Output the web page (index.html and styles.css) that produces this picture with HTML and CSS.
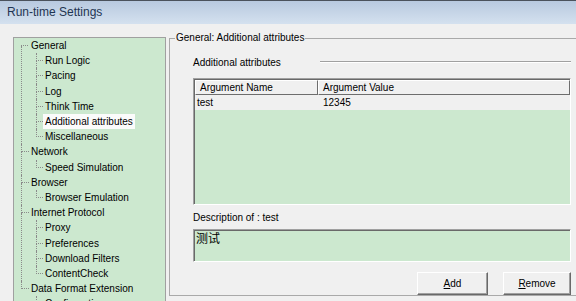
FILE: index.html
```html
<!DOCTYPE html>
<html>
  <head>
    <title>Run-time Settings</title>
    <meta charset="utf-8">
    <link rel="stylesheet" href="styles.css">
  </head>
  <body>
    <div class="titlebar">Run-time Settings</div>
    <div class="client">
      <div class="tree">
        <ul class="tree-root">
          <li><span class="node">General</span>
            <ul>
              <li><span class="node">Run Logic</span></li>
              <li><span class="node">Pacing</span></li>
              <li><span class="node">Log</span></li>
              <li><span class="node">Think Time</span></li>
              <li><span class="node selected">Additional attributes</span></li>
              <li><span class="node">Miscellaneous</span></li>
            </ul>
          </li>
          <li><span class="node">Network</span>
            <ul>
              <li><span class="node">Speed Simulation</span></li>
            </ul>
          </li>
          <li><span class="node">Browser</span>
            <ul>
              <li><span class="node">Browser Emulation</span></li>
            </ul>
          </li>
          <li><span class="node">Internet Protocol</span>
            <ul>
              <li><span class="node">Proxy</span></li>
              <li><span class="node">Preferences</span></li>
              <li><span class="node">Download Filters</span></li>
              <li><span class="node">ContentCheck</span></li>
            </ul>
          </li>
          <li><span class="node">Data Format Extension</span>
            <ul>
              <li><span class="node">Configuration</span></li>
            </ul>
          </li>
        </ul>
      </div>
      <fieldset class="group">
        <legend>General: Additional attributes</legend>
        <div class="group-body">
          <div class="section-title">
            <span class="section-label">Additional attributes</span>
            <div class="rule"></div>
          </div>
          <div class="list">
            <div class="list-head">
              <div class="col">Argument Name</div>
              <div class="col">Argument Value</div>
            </div>
            <div class="list-row selected">
              <div class="cell">test</div>
              <div class="cell">12345</div>
            </div>
          </div>
          <div class="desc-label">Description of : test</div>
          <div class="desc-box">测试</div>
          <div class="buttons">
            <button class="btn btn-add"><u>A</u>dd</button>
            <button class="btn btn-remove"><u>R</u>emove</button>
          </div>
        </div>
      </fieldset>
    </div>
  </body>
</html>
```

FILE: styles.css
```css
body {
  margin: 0;
  height: 301px;
  overflow: hidden;
  background: #f0f0f0;
  font: 10px "Liberation Sans", Arial, sans-serif;
  color: #000;
}
.titlebar {
  height: 24px;
  box-sizing: border-box;
  border-top: 1px solid #4b525c;
  background: linear-gradient(#b8c9df, #d4e1ef);
  padding-left: 7px;
  font-size: 12px;
  line-height: 23px;
  color: #1f3552;
}
.client {
  display: flex;
  align-items: flex-start;
  padding: 13px 0 0 13px;
}

/* tree */
.tree {
  flex: 0 0 153px;
  box-sizing: border-box;
  height: 290px;
  background: #cce8cf;
  border: 1px solid #a0a0a0;
  overflow: hidden;
}
.tree ul {
  list-style: none;
  margin: 0;
  padding: 0 0 0 14px;
}
.tree-root {
  padding-left: 15px !important;
}
.tree li {
  position: relative;
  line-height: 15.2px;
  white-space: nowrap;
}
.tree li::before {
  content: "";
  position: absolute;
  left: -7px;
  top: 0;
  width: 6px;
  height: 7px;
  border-left: 1px dotted #8a8a8a;
  border-bottom: 1px dotted #8a8a8a;
}
.tree li:not(:last-child)::after {
  content: "";
  position: absolute;
  left: -7px;
  top: 8px;
  bottom: 0;
  border-left: 1px dotted #8a8a8a;
}
.tree-root > li::before,
.tree-root > li:not(:last-child)::after {
  left: -8px;
  width: 7px;
}
.tree-root > li:first-child::before {
  border-left: none;
}
.node {
  display: inline-block;
  padding: 0 2px;
}
.node.selected {
  background: #fbfbfb;
}

/* group box */
.group {
  flex-shrink: 0;
  margin: -5px 0 0 3px;
  padding: 0 8px 0 5px;
  border: 1px solid #a9a9a9;
  min-width: 0;
}
.group legend {
  padding: 0 1px;
  line-height: 12px;
}
.group-body {
  width: 378px;
  padding: 11px 0 0 18px;
}
.section-title {
  display: flex;
  align-items: center;
  height: 14px;
}
.section-label {
  width: 127px;
}
.rule {
  flex: 1;
  border-top: 1px solid #a0a0a0;
  border-bottom: 1px solid #fff;
}

/* list view */
.list {
  margin-top: 9px;
  height: 127px;
  box-sizing: border-box;
  padding: 1px 0 0 1px;
  background: #cce8cf;
  border: 1px solid;
  border-color: #a0a0a0 #fff #fff #a0a0a0;
  box-shadow: inset 1px 1px #696969;
}
.list-head,
.list-row {
  display: grid;
  grid-template-columns: 123px 1fr;
}
.list-head .col {
  box-sizing: border-box;
  height: 15px;
  line-height: 13px;
  padding-left: 4px;
  background: #f0f0f0;
  border: 1px solid;
  border-color: #fff #6d6d6d #6d6d6d #fff;
}
.list-row {
  height: 15px;
  line-height: 15px;
}
.list-row.selected {
  background: #f0f0f0;
}
.list-row .cell:first-child {
  padding-left: 2px;
}
.list-row .cell:last-child {
  padding-left: 5px;
}

/* description */
.desc-label {
  margin-top: 6px;
  line-height: 14px;
}
.desc-box {
  margin-top: 4px;
  height: 33px;
  box-sizing: border-box;
  padding: 1px 0 0 2px;
  background: #cce8cf;
  border: 1px solid;
  border-color: #a0a0a0 #fff #fff #a0a0a0;
  box-shadow: inset 1px 1px #696969;
  font: 12px/14px "Noto Sans CJK SC", sans-serif;
}

/* buttons */
.buttons {
  display: flex;
  justify-content: flex-end;
  gap: 15px;
  margin-top: 10px;
}
.btn {
  height: 23px;
  padding: 0;
  background: #f0f0f0;
  border: 1px solid;
  border-color: #fff #696969 #696969 #fff;
  box-shadow: inset -1px -1px #a0a0a0;
  font: 10px "Liberation Sans", Arial, sans-serif;
  color: #000;
}
.btn-add {
  width: 71px;
}
.btn-remove {
  width: 68px;
}
```
